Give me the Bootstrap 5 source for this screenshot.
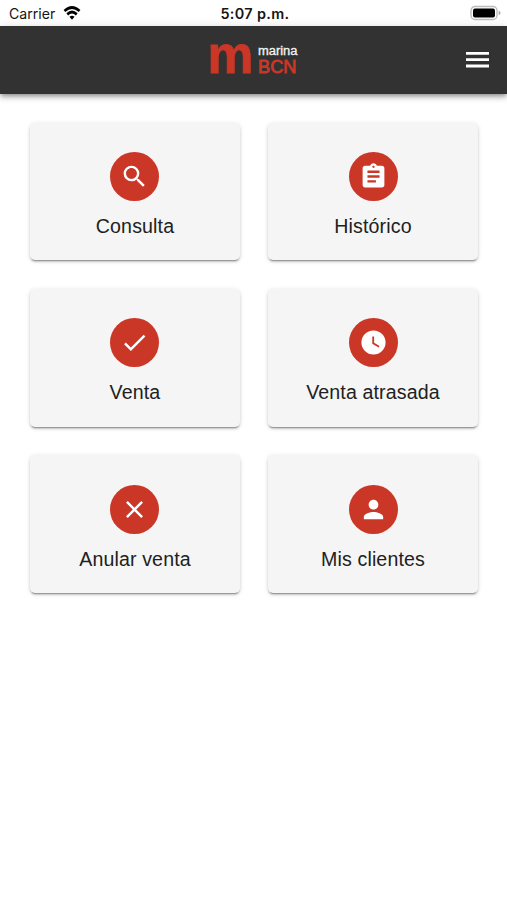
<!DOCTYPE html>
<html lang="es">
<head>
<meta charset="utf-8">
<meta name="viewport" content="width=device-width, initial-scale=1">
<title>marina BCN</title>
<link href="https://cdn.jsdelivr.net/npm/bootstrap@5.3.0/dist/css/bootstrap.min.css" rel="stylesheet">
<style>
body{font-family:"Liberation Sans",Arial,sans-serif;background:#fff;color:#212121;min-height:100vh}
.status{height:26px;padding:0 6px 0 9px;font-family:Inter,sans-serif;font-size:14.1px;line-height:27px;color:#151515}
.status>*{flex:1 1 0}
.status .clock{font-weight:600;font-size:14.4px;letter-spacing:.36px}
.topbar{height:67.6px;padding:0 18px;background:#323232;box-shadow:0 2px 4px -1px rgba(0,0,0,.3),0 4px 5px rgba(0,0,0,.16),0 1px 10px rgba(0,0,0,.12)}
.topbar>*{flex:1 1 0}
.tiles{display:grid;grid-template-columns:1fr 1fr;gap:28.4px;padding:29px 29.2px 0 30.2px}
.tile{height:137.8px;padding-top:29.7px;background:#f5f5f5;border-radius:5px;color:#212121;font-size:19.6px;line-height:24px;letter-spacing:.13px;box-shadow:0 3px 1px -2px rgba(0,0,0,.25),0 2px 2px rgba(0,0,0,.16),0 1px 5px rgba(0,0,0,.13)}
.disc{width:49px;height:49px;background:#cb3727;margin-bottom:13px}
</style>
<script src="https://cdn.jsdelivr.net/npm/bootstrap@5.3.0/dist/js/bootstrap.bundle.min.js"></script>
</head>
<body>
<div class="status d-flex">
  <div class="d-flex align-items-center">Carrier
    <svg class="ms-2" width="18" height="16" viewBox="0 0 20 16" preserveAspectRatio="none" fill="none" stroke="#000" stroke-width="2.9"><path d="M1.600 6Q10 -1.200 18.400 6M4.700 9.300Q10 4.600 15.300 9.300"/><path d="M10 14.800l-2.800-3Q10 9.700 12.800 11.800z" fill="#000" stroke="none"/></svg>
  </div>
  <div class="clock text-center text-nowrap">5:07 p.m.</div>
  <div class="d-flex justify-content-end align-items-center">
    <svg width="31" height="16" viewBox="0 0 31 16"><rect x="1" y="1.500" width="26" height="13" rx="4" fill="#fff" stroke="#bcbcbc" stroke-width="1.400"/><rect x="3" y="3.500" width="22" height="9" rx="2" fill="#000"/><path d="M28.600 5.800q2 .6 2 2.200t-2 2.200z" fill="#aaa"/></svg>
  </div>
</div>
<nav class="topbar d-flex align-items-center">
  <span></span>
  <a class="d-flex justify-content-center" href="#" aria-label="marina BCN">
    <svg width="96" height="68" viewBox="-2 -14 96 68"><g font-family="Liberation Sans" fill="#cb3727"><text x="-.500" y="32.500" font-size="51" font-weight="700" stroke="#cb3727" stroke-width=".8" textLength="46" lengthAdjust="spacingAndGlyphs">m</text><text x="50" y="14.800" font-size="12" fill="#f2f2f2" stroke="#f2f2f2" stroke-width=".3" textLength="39.500" lengthAdjust="spacingAndGlyphs">marina</text><text x="50" y="32.700" font-size="17.600" stroke="#cb3727" stroke-width=".8" textLength="38.500" lengthAdjust="spacingAndGlyphs">BCN</text></g></svg>
  </a>
  <div class="d-flex justify-content-end"><svg width="23" height="16" viewBox="0 0 23 16" fill="#fff"><path d="M0 0h23v2.800H0zM0 6.300h23v2.800H0zM0 12.600h23v2.800H0z"/></svg></div>
</nav>
<main class="tiles">
  <a class="tile d-flex flex-column align-items-center text-decoration-none" href="#"><span class="disc rounded-circle d-flex align-items-center justify-content-center"><svg width="29" height="29" viewBox="0 0 24 24" fill="#fff"><path d="M15.500 14h-.79l-.28-.27A6.471 6.471 0 0 0 16 9.500 6.500 6.500 0 1 0 9.500 16c1.610 0 3.090-.59 4.230-1.570l.27.28v.79l5 4.990L20.490 19l-4.990-5zm-6 0C7.010 14 5 11.990 5 9.500S7.010 5 9.500 5 14 7.010 14 9.500 11.990 14 9.500 14z"/></svg></span>Consulta</a>
  <a class="tile d-flex flex-column align-items-center text-decoration-none" href="#"><span class="disc rounded-circle d-flex align-items-center justify-content-center"><svg width="29" height="29" viewBox="0 0 24 24" fill="#fff"><path d="M19 3h-4.180C14.400 1.840 13.300 1 12 1c-1.300 0-2.400.84-2.820 2H5c-1.100 0-2 .9-2 2v14c0 1.100.9 2 2 2h14c1.100 0 2-.9 2-2V5c0-1.100-.9-2-2-2zm-7 0c.55 0 1 .45 1 1s-.45 1-1 1-1-.45-1-1 .45-1 1-1zm2 14H7v-2h7v2zm3-4H7v-2h10v2zm0-4H7V7h10v2z"/></svg></span>Histórico</a>
  <a class="tile d-flex flex-column align-items-center text-decoration-none" href="#"><span class="disc rounded-circle d-flex align-items-center justify-content-center"><svg width="29" height="29" viewBox="0 0 24 24" fill="#fff"><path d="M9 16.170L4.830 12l-1.420 1.410L9 19 21 7l-1.410-1.410z"/></svg></span>Venta</a>
  <a class="tile d-flex flex-column align-items-center text-decoration-none" href="#"><span class="disc rounded-circle d-flex align-items-center justify-content-center"><svg width="29" height="29" viewBox="0 0 24 24" fill="#fff"><path d="M12 2a10 10 0 1 0 0 20 10 10 0 0 0 0-20zm4.200 14.200L11 13V7h1.500v5.200l4.500 2.700-.8 1.300z"/></svg></span>Venta atrasada</a>
  <a class="tile d-flex flex-column align-items-center text-decoration-none" href="#"><span class="disc rounded-circle d-flex align-items-center justify-content-center"><svg width="29" height="29" viewBox="0 0 24 24" fill="#fff"><path d="M19 6.410L17.590 5 12 10.590 6.410 5 5 6.410 10.590 12 5 17.590 6.410 19 12 13.410 17.590 19 19 17.590 13.410 12z"/></svg></span>Anular venta</a>
  <a class="tile d-flex flex-column align-items-center text-decoration-none" href="#"><span class="disc rounded-circle d-flex align-items-center justify-content-center"><svg width="29" height="29" viewBox="0 0 24 24" fill="#fff"><path d="M12 12c2.210 0 4-1.790 4-4s-1.790-4-4-4-4 1.790-4 4 1.790 4 4 4zm0 2c-2.670 0-8 1.340-8 4v2h16v-2c0-2.660-5.330-4-8-4z"/></svg></span>Mis clientes</a>
</main>
</body>
</html>
